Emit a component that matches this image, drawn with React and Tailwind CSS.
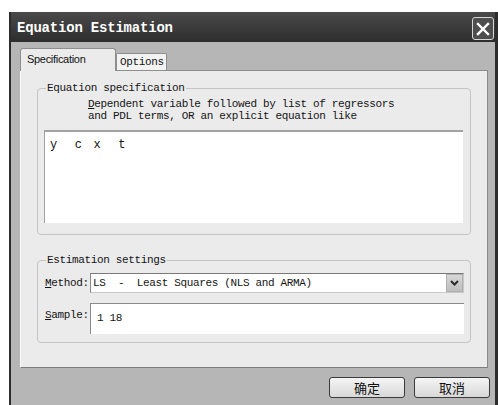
const mono =
  "font-['Liberation_Mono','Courier_New','Nimbus_Mono_PS',monospace] text-[11px] leading-[12px] tracking-[-0.35px] text-[#141414]";

function CloseButton() {
  return (
    <div className="flex h-[23px] w-[22px] items-center justify-center rounded-[3px] border border-[#d6d6d6] bg-[#4e4e4e]">
      <svg width="14" height="14" viewBox="0 0 14 14">
        <path d="M2 2 L12 12 M12 2 L2 12" stroke="#ffffff" strokeWidth="2.4" strokeLinecap="square" />
      </svg>
    </div>
  );
}

function DropArrow() {
  return (
    <div className="flex h-[18px] w-[17px] items-center justify-center border border-[#b0b0b0] bg-gradient-to-b from-[#d8d8d8] to-[#bdbdbd]">
      <svg width="9" height="6" viewBox="0 0 9 6">
        <path d="M1 1 L4.5 4.5 L8 1" stroke="#2b2b2b" strokeWidth="2" fill="none" />
      </svg>
    </div>
  );
}

function DialogButton({ children }) {
  return (
    <button className="h-[21px] w-[76px] rounded-[3px] border border-[#3a3a3a] bg-gradient-to-b from-[#f4f4f4] to-[#d9d9d9] font-['Noto_Sans_CJK_SC',sans-serif] text-[13px] leading-[19px] text-[#111]">
      {children}
    </button>
  );
}

export default function App() {
  return (
    <div className="h-[405px] w-[498px] overflow-hidden bg-white pl-[9px] pt-[12px]">
      <div className="flex h-[393px] w-[489px] flex-col border-l-2 border-r-[3px] border-[#2c2c2c] bg-[#b6b6b6]">
        {/* title bar */}
        <div className="flex h-[30px] shrink-0 items-start justify-between bg-gradient-to-b from-[#4a4a4a] to-[#2e2e2e] pl-[6px] pr-[1px]">
          <span className="pt-[8px] font-['Liberation_Mono','Courier_New',monospace] text-[14px] font-bold leading-[16px] tracking-[-0.2px] text-white">
            Equation Estimation
          </span>
          <div className="pt-[5px]">
            <CloseButton />
          </div>
        </div>

        {/* tabs */}
        <div className="ml-[9px] mr-[7px] mt-[6px] flex items-end">
          <div className="relative z-10 -mb-px flex h-[23px] w-[96px] items-start rounded-t-[3px] border border-b-0 border-[#8e8e8e] bg-[#ebebeb] pl-[6px] pt-[4px] font-['Liberation_Sans',Arial,sans-serif] text-[11px] leading-[13px] tracking-[-0.3px] text-[#111]">
            Specification
          </div>
          <div className={`flex h-[17px] w-[51px] items-center rounded-t-[2px] border border-b-0 border-[#8e8e8e] bg-[#f3f3f3] pl-[3px] ${mono}`}>
            Options
          </div>
        </div>

        {/* tab page */}
        <div className="ml-[9px] mr-[7px] h-[298px] shrink-0 border border-l-[#fafafa] border-t-[#8e8e8e] border-r-[#8a8a8a] border-b-[#7c7c7c] bg-[#ebebeb]">
          <fieldset className="mx-[16px] mt-[11px] h-[153px] rounded-[4px] border border-[#c4c4c4] pl-[6px] pr-[7px]">
            <legend className={`ml-[2px] px-[1px] ${mono}`}>Equation specification</legend>
            <div className={`pl-[44px] pt-[4px] ${mono}`}>
              <div>
                <span className="underline">D</span>ependent variable followed by list of regressors
              </div>
              <div>and PDL terms, OR an explicit equation like</div>
            </div>
            <div className="mt-[8px] h-[93px] border-l border-t-2 border-[#a2a2a2] bg-white pl-[5px] pt-[7px]">
              <div className={`whitespace-pre ${mono} text-[12px] tracking-[-1px]`}>y   c  x   t</div>
            </div>
          </fieldset>

          <fieldset className="mx-[16px] mt-[19px] h-[89px] rounded-[4px] border border-[#c4c4c4] pl-[7px] pr-[6px]">
            <legend className={`ml-[1px] px-[1px] ${mono}`}>Estimation settings</legend>
            <div className="mt-[7px] flex items-center">
              <span className={`w-[45px] ${mono}`}>
                <span className="underline">M</span>ethod:
              </span>
              <div className="flex h-[20px] flex-1 items-center justify-between border border-l-[#8a8a8a] border-t-[#7a7a7a] border-r-[#c8c8c8] border-b-[#c8c8c8] bg-white pl-[2px]">
                <span className={`whitespace-pre ${mono}`}>LS  -  Least Squares (NLS and ARMA)</span>
                <DropArrow />
              </div>
            </div>
            <div className="mt-[10px] flex items-start">
              <span className={`w-[45px] pt-[6px] ${mono}`}>
                <span className="underline">S</span>ample:
              </span>
              <div className="h-[31px] flex-1 border-l border-t border-[#8a8a8a] bg-white pl-[6px] pt-[8px]">
                <span className={`block ${mono}`}>1 18</span>
              </div>
            </div>
          </fieldset>
        </div>

        {/* buttons */}
        <div className="flex justify-end gap-[9px] pr-[5px] pt-[9px]">
          <DialogButton>确定</DialogButton>
          <DialogButton>取消</DialogButton>
        </div>
      </div>
    </div>
  );
}
